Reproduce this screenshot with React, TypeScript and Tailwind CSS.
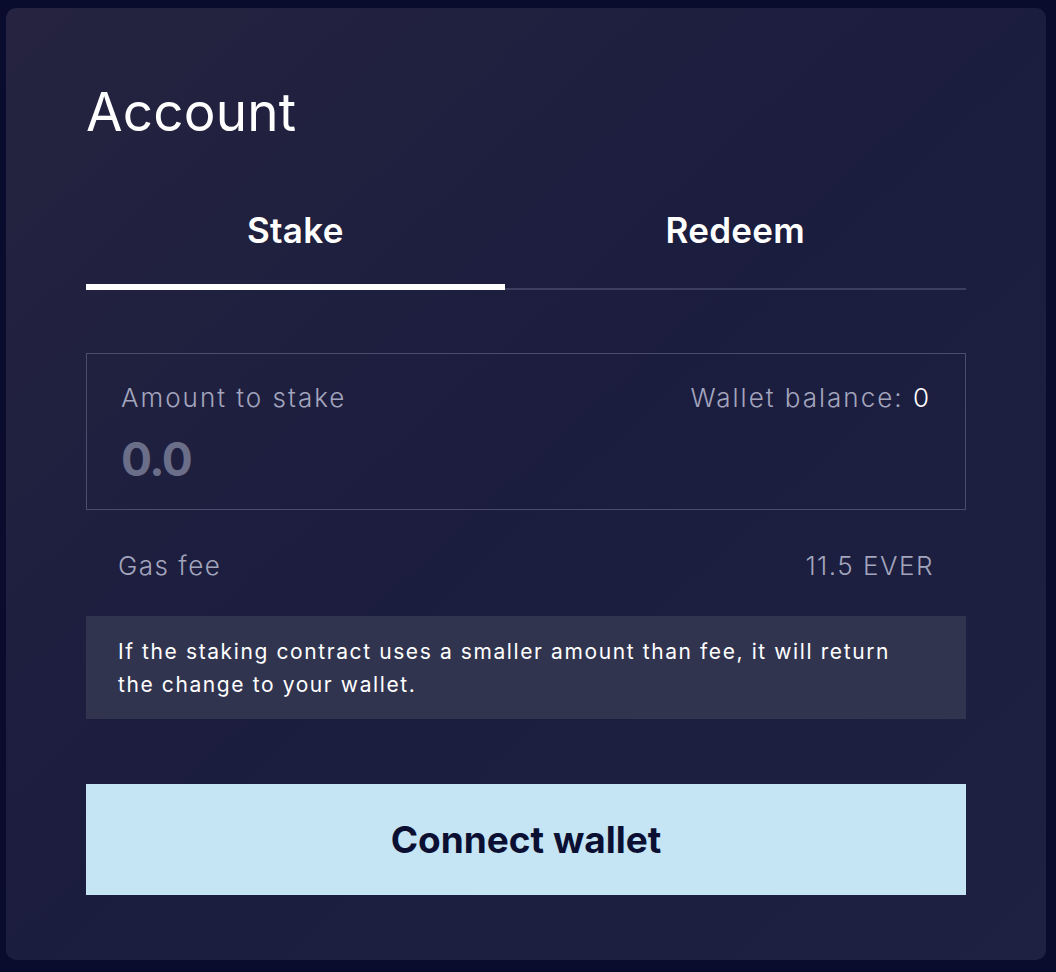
import React from "react";

export default function App() {
  return (
    <div className="w-[1056px] h-[972px] bg-[#0a0c2e] p-[8px_10px_12px_6px]" style={{ fontFamily: "Inter, 'Noto Sans', sans-serif" }}>
      <div className="h-full rounded-[10px] bg-gradient-to-br from-[#25233f] via-[#1b1d3f] to-[#1e2142] px-[80px] pt-[72px] flex flex-col">
        <h1 className="text-[53px] leading-[64px] text-white font-normal tracking-[0.2px]">Account</h1>
        <div className="mt-[66px] flex items-end">
          <button className="flex-auto border-b-[6px] border-white pb-[34px] text-[35px] leading-[40px] font-semibold text-white tracking-[0.3px]">Stake</button>
          <button className="flex-auto border-b-2 border-[#3c3f5e] pb-[38px] text-[35px] leading-[40px] font-semibold text-white tracking-[0.3px]">Redeem</button>
        </div>
        <div className="mt-[63px] border border-[#4a4d6b] h-[157px] px-[34px] pt-[28px]">
          <div className="flex justify-between text-[26px] leading-[32px] tracking-[2px] text-[#a3a5bd] font-light">
            <span>Amount to stake</span>
            <span>Wallet balance: <span className="text-white">0</span></span>
          </div>
          <div className="mt-[19px] text-[46px] leading-[52px] font-bold tracking-[-1.5px] text-[#6b6e88]">0.0</div>
        </div>
        <div className="mt-[40px] flex justify-between px-[32px] text-[26px] leading-[32px] tracking-[1.5px] text-[#a3a5bd] font-light">
          <span>Gas fee</span>
          <span>11.5 EVER</span>
        </div>
        <div className="mt-[34px] h-[103px] flex items-center bg-[#31344f] pl-[32px] pr-[64px] text-[21px] leading-[33px] tracking-[1.6px] text-white">
          If the staking contract uses a smaller amount than fee, it will return the change to your wallet.
        </div>
        <button className="mt-[65px] h-[111px] bg-[#c5e4f4] text-[37px] font-bold text-[#0b1033]">Connect wallet</button>
      </div>
    </div>
  );
}
